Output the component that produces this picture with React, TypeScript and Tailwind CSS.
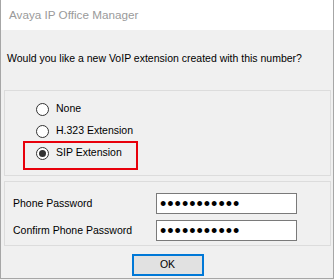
import { useState } from "react";

const OPTIONS = ["None", "H.323 Extension", "SIP Extension"];

function Radio({ checked }: { checked: boolean }) {
  return (
    <span className="w-[13px] h-[13px] rounded-full border border-[#333333] bg-white flex items-center justify-center shrink-0">
      {checked ? <span className="w-[7px] h-[7px] rounded-full bg-[#333333]" /> : null}
    </span>
  );
}

function PasswordRow({ label }: { label: string }) {
  return (
    <div className="flex items-center h-[21px]">
      <div className="w-[143px] whitespace-nowrap">{label}</div>
      <div className="w-[141px] h-[21px] border border-[#7a7a7a] bg-white flex items-center pl-[3px]">
        <span className="text-[18px] leading-none tracking-[1px] text-black">
          •••••••••••
        </span>
      </div>
    </div>
  );
}

export default function App() {
  const [selected, setSelected] = useState<number>(2);

  return (
    <div
      className="w-[334px] h-[280px] bg-[#f0f0f0] text-[10.5px] text-black"
      style={{ fontFamily: '"Liberation Sans", Arial, sans-serif' }}
    >
      <div className="h-[279px] flex flex-col border-x border-b border-[#a6a6a6]">
        <div className="h-[30px] bg-white flex items-center pl-[8px] text-[11.7px] text-[#9a9a9a]">
          Avaya IP Office Manager
        </div>

        <div className="flex-1 flex flex-col pl-[3px] pr-[2px]">
          <p className="pt-[21px] pl-[3px] leading-[15px] whitespace-nowrap">
            Would you like a new VoIP extension created with this number?
          </p>

          <div className="mt-[24px] h-[86px] border border-[#dcdcdc] pt-[7px]">
            {OPTIONS.map((opt, i) => (
              <div
                key={opt}
                className="relative h-[22px] flex items-center gap-[7px] pl-[31px] cursor-default"
                onClick={() => setSelected(i)}
              >
                <Radio checked={selected === i} />
                <span>{opt}</span>
                {i === 2 ? (
                  <span className="absolute left-[18px] top-[-1px] w-[115px] h-[29px] border-2 border-[#e8000b]" />
                ) : null}
              </div>
            ))}
          </div>

          <div className="mt-[5px] h-[65px] border border-[#dcdcdc] pt-[11px] pl-[8px] flex flex-col gap-[6px]">
            <PasswordRow label="Phone Password" />
            <PasswordRow label="Confirm Phone Password" />
          </div>

          <button className="mt-[8px] mx-auto w-[72px] h-[22px] border-2 border-[#0078d7] bg-[#e1e1e1] flex items-center justify-center">
            OK
          </button>
        </div>
      </div>
    </div>
  );
}
